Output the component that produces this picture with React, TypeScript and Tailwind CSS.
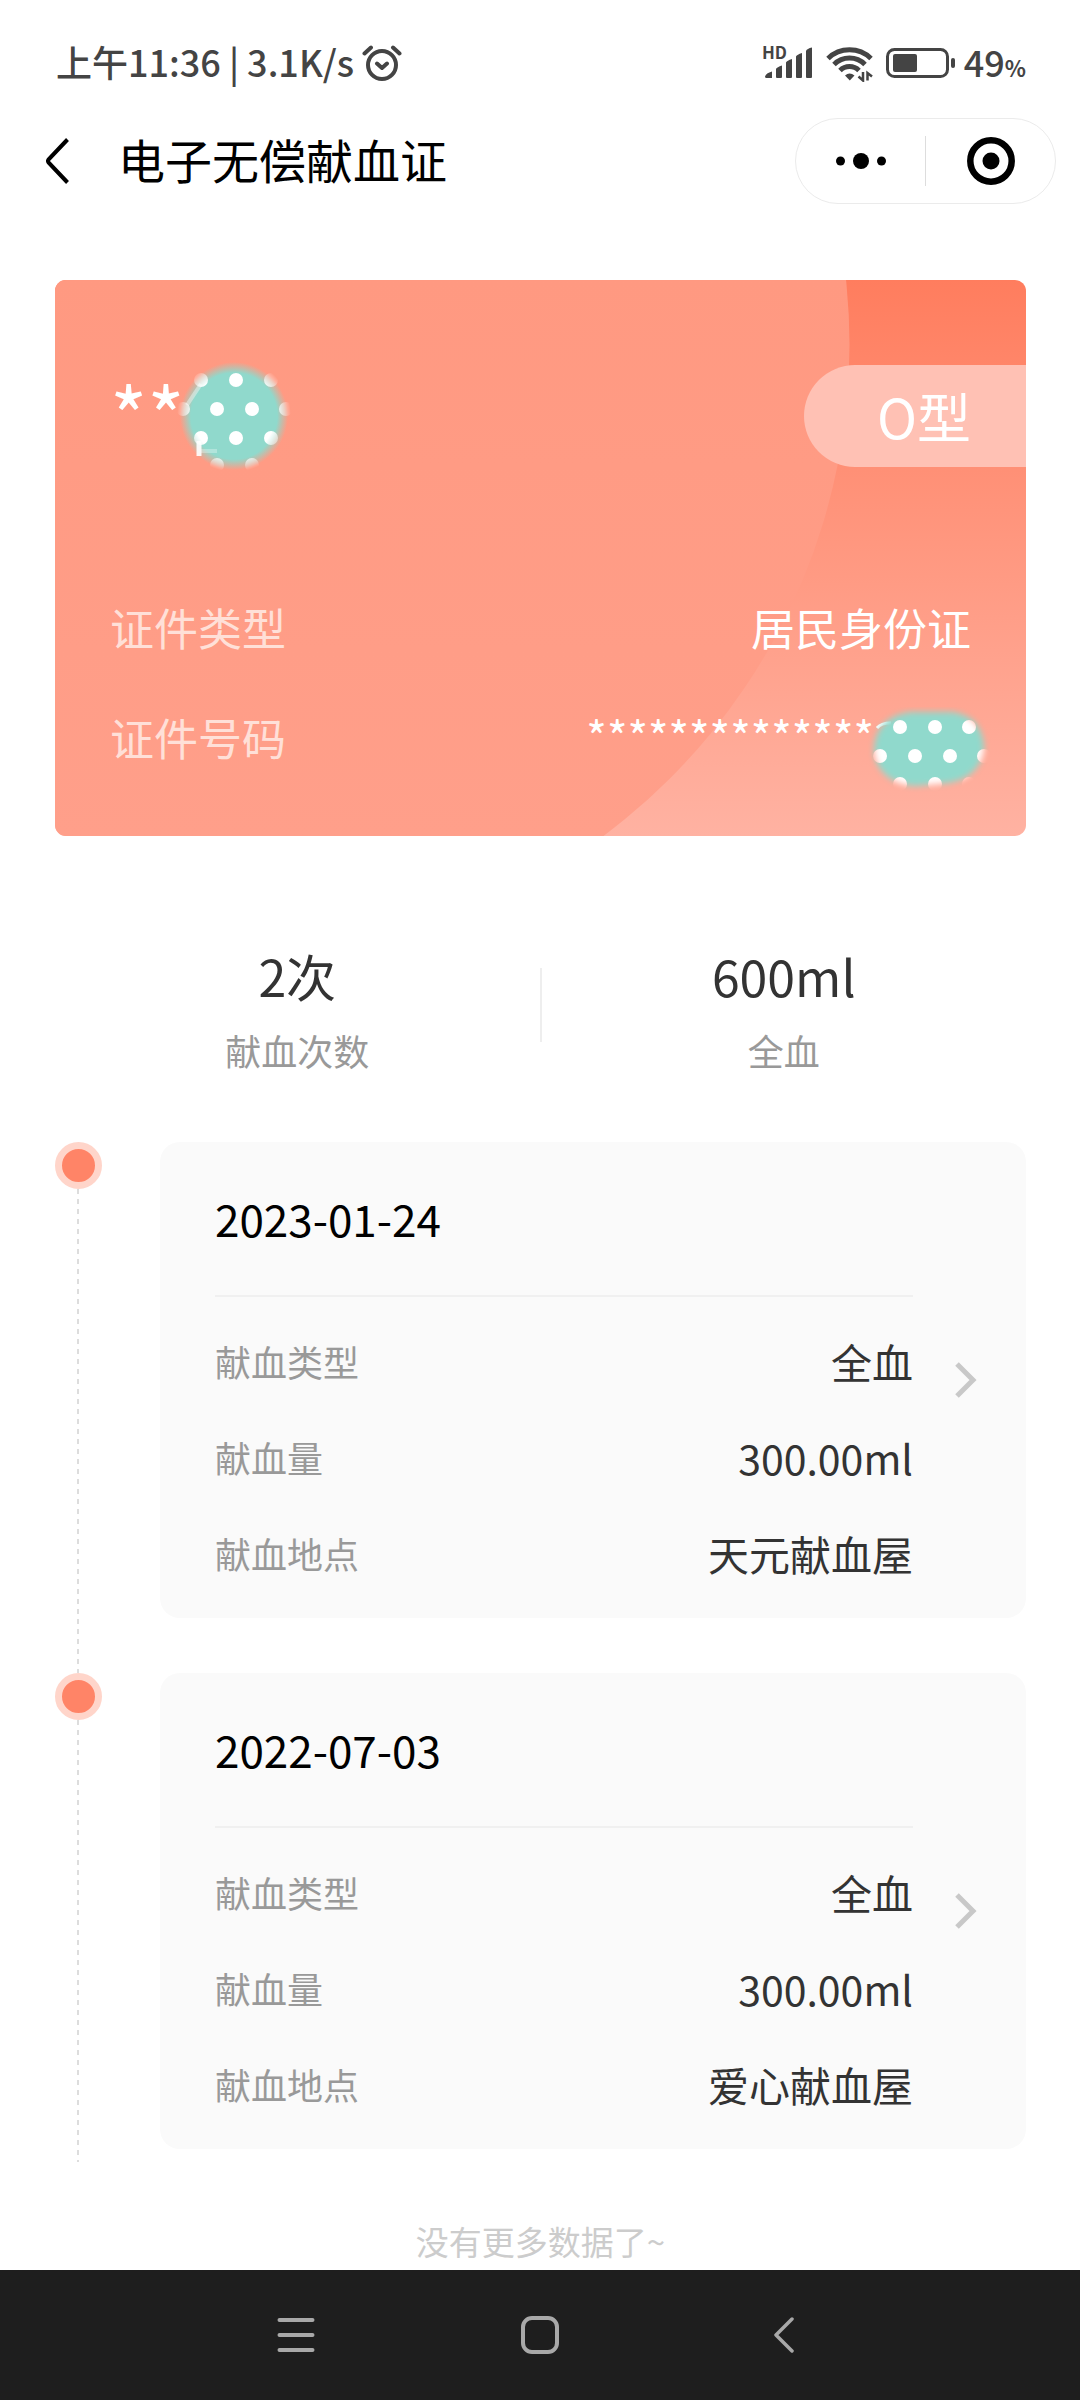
interface DonationRecord {
  id: string;
  date: string;
  type: string;
  volume: string;
  place: string;
}

const records: DonationRecord[] = [
  { id: "1", date: "2023-01-24", type: "全血", volume: "300.00ml", place: "天元献血屋" },
  { id: "2", date: "2022-07-03", type: "全血", volume: "300.00ml", place: "爱心献血屋" },
];

const stats = [
  { value: "2次", label: "献血次数" },
  { value: "600ml", label: "全血" },
];

function StatusBar() {
  return (
    <div className="flex h-[118px] items-center justify-between pt-2 pr-[54px] pl-[56px] text-[#444]">
      <div className="flex items-center gap-2">
        <span className="pb-1 text-[36px] leading-[48px] font-medium">上午11:36 | 3.1K/s</span>
        <svg width="40" height="38" viewBox="0 0 40 38" fill="none" stroke="currentColor" strokeWidth="4" strokeLinecap="round" strokeLinejoin="round">
          <circle cx="20" cy="21" r="14" />
          <path d="M2.5 9.5 9 3.5M37.5 9.5 31 3.5M15 19.5l5 4.5 5-4.5" />
        </svg>
      </div>

      <div className="flex items-center">
        <svg width="52" height="46" viewBox="0 0 52 46" fill="currentColor">
          <text x="0" y="19" fontSize="17" fontWeight="700">HD</text>
          <path d="M3 36.500q1-3.500 7-5v6.500h-5.500q-1.500 0-1.500-1.500zM14 29q1-2 6-3.500v11.500q0 1-1 1h-4q-1 0-1-1zM24 22.500q1-2 6-3.500v18q0 1-1 1h-4q-1 0-1-1zM34 16.500q1-2 6-3.500v24q0 1-1 1h-4q-1 0-1-1zM44 11q1-2.500 6-3.500v29.500q0 1-1 1h-4q-1 0-1-1z" />
        </svg>
        <svg className="ml-3" width="48" height="38" viewBox="0 0 48 38" fill="none" stroke="currentColor" strokeWidth="5">
          <path d="M2 14.500a31 31 0 0 1 43 0M8 20.500a22 22 0 0 1 31 0M14 26.500a13.500 13.500 0 0 1 19 0" />
          <path d="M19 31.500q4.500-4 9.500 0l-4.700 5z" fill="currentColor" stroke="none" />
          <path d="M37 28v8.500l-4.500-4M41.500 36.500V29l4.500 3.500" strokeWidth="2.500" />
        </svg>
        <svg className="ml-3" width="70" height="32" viewBox="0 0 70 32" fill="none">
          <rect x="1.500" y="2.500" width="60" height="27" rx="7" stroke="currentColor" strokeWidth="3" />
          <rect x="7" y="7" width="24" height="18" rx="2" fill="currentColor" />
          <rect x="65" y="11" width="4" height="10" rx="2" fill="currentColor" />
        </svg>
        <p className="ml-2 flex items-baseline pb-1 font-medium">
          <span className="text-[36px] leading-[48px]">49</span>
          <span className="text-[22px] font-bold">%</span>
        </p>
      </div>
    </div>
  );
}

function Header() {
  return (
    <header className="flex h-[86px] items-center justify-between pr-[24px] pl-[46px]">
      <div className="flex items-center gap-12">
        <button type="button" aria-label="返回">
          <svg width="24" height="46" viewBox="0 0 24 46" fill="none" stroke="#000" strokeWidth="4">
            <path d="M21.500 1.500 2.500 21.500q-1 1.500 0 3L21.500 44.500" />
          </svg>
        </button>
        <h1 className="pb-1 text-[47px] leading-[64px] text-black">电子无偿献血证</h1>
      </div>

      <div className="flex h-full w-[261px] items-center rounded-full border border-[#ebebeb]">
        <button type="button" aria-label="更多" className="flex h-full flex-1 items-center justify-center">
          <svg width="50" height="16" viewBox="0 0 50 16" fill="#000">
            <circle cx="4.500" cy="8" r="4.500" />
            <circle cx="25" cy="8" r="8" />
            <circle cx="45.500" cy="8" r="4.500" />
          </svg>
        </button>
        <div className="h-[50px] w-px bg-[#ddd]" />
        <button type="button" aria-label="关闭" className="flex h-full flex-1 items-center justify-center">
          <svg width="48" height="48" viewBox="0 0 48 48">
            <circle cx="24" cy="24" r="20.700" fill="none" stroke="#000" strokeWidth="6.500" />
            <circle cx="24" cy="24" r="8.500" fill="#000" />
          </svg>
        </button>
      </div>
    </header>
  );
}

// Dotted sticker over the last character of the name
function NameSticker() {
  return (
    <svg className="absolute -top-[9px] left-[66px]" width="120" height="120" viewBox="0 0 120 120">
      <defs>
        <radialGradient id="name-fade">
          <stop offset="0.72" stopColor="#fff" />
          <stop offset="0.88" stopColor="#fff" stopOpacity="0.45" />
          <stop offset="1" stopColor="#fff" stopOpacity="0" />
        </radialGradient>
        <mask id="name-mask">
          <circle cx="58" cy="59" r="57" fill="url(#name-fade)" />
        </mask>
        <radialGradient id="name-teal">
          <stop offset="0.8" stopColor="#90d9cc" />
          <stop offset="1" stopColor="#90d9cc" stopOpacity="0" />
        </radialGradient>
      </defs>
      <circle cx="58" cy="60" r="54" fill="url(#name-teal)" />
      <path d="M25 28 11 49" stroke="#fff" strokeWidth="4" opacity="0.4" />
      <path d="M23 85v15" stroke="#fff" strokeWidth="5" opacity="0.9" />
      <path d="M25 95h16" stroke="#fff" strokeWidth="4" opacity="0.3" />
      <g fill="#fff" mask="url(#name-mask)">
        <circle cx="25" cy="24" r="7" />
        <circle cx="60" cy="24" r="7" />
        <circle cx="95" cy="24" r="7" />
        <circle cx="7" cy="53" r="7" />
        <circle cx="41" cy="53" r="7" />
        <circle cx="76" cy="53" r="7" />
        <circle cx="110" cy="53" r="7" />
        <circle cx="25" cy="82" r="7" />
        <circle cx="60" cy="82" r="7" />
        <circle cx="95" cy="82" r="7" />
        <circle cx="41" cy="109" r="7" />
        <circle cx="76" cy="109" r="7" />
      </g>
    </svg>
  );
}

// Dotted sticker over the last digits of the ID number
function NumberSticker() {
  return (
    <svg className="absolute top-0 -right-[20px]" width="124" height="90" viewBox="0 0 124 90">
      <defs>
        <filter id="number-blur" x="-20%" y="-20%" width="140%" height="140%">
          <feGaussianBlur stdDeviation="3" />
        </filter>
        <mask id="number-mask">
          <path
            d="M44 5h40c20 2 32 14 33 36-2 20-16 32-36 35l-32 3C24 78 9 64 7 44 7 22 20 8 44 5z"
            fill="#fff"
            filter="url(#number-blur)"
          />
        </mask>
      </defs>
      <path d="M10 21q4-5 14-5" fill="none" stroke="#fff" strokeWidth="3" />
      <g mask="url(#number-mask)">
        <rect width="124" height="90" fill="#90d9cc" />
        <g fill="#fff">
          <circle cx="33" cy="20" r="7" />
          <circle cx="68" cy="20" r="7" />
          <circle cx="102" cy="20" r="7" />
          <circle cx="13" cy="49" r="7" />
          <circle cx="48" cy="49" r="7" />
          <circle cx="83" cy="49" r="7" />
          <circle cx="117" cy="49" r="7" />
          <circle cx="33" cy="77" r="7" />
          <circle cx="68" cy="77" r="7" />
          <circle cx="102" cy="77" r="7" />
        </g>
      </g>
    </svg>
  );
}

function DonorCard() {
  return (
    <section className="relative mt-[76px] overflow-hidden rounded-[11px] bg-linear-to-b from-[#ff7d5e] to-[#ffb2a2] pt-[85px] pb-[69px] text-white">
      <svg className="absolute top-0 left-0" width="795" height="556" viewBox="0 0 795 556">
        <defs>
          <linearGradient id="disc" x1="0" y1="0" x2="0" y2="556" gradientUnits="userSpaceOnUse">
            <stop offset="0" stopColor="#ff9981" />
            <stop offset="1" stopColor="#ff9f8a" />
          </linearGradient>
        </defs>
        <circle cx="181.500" cy="65" r="613" fill="url(#disc)" />
      </svg>

      <div className="relative flex items-start justify-between pl-[55px]">
        <div className="relative">
          <p className="text-[80px] leading-[96px]">**</p>
          <NameSticker />
        </div>
        <p className="w-[222px] rounded-l-full bg-[#ffc1b4] pr-[55px] text-right text-[54px] leading-[102px]">O型</p>
      </div>

      <dl className="relative mt-[130px] flex flex-col gap-[50px] px-[55px] text-[44px] leading-[60px]">
        <div className="flex justify-between">
          <dt className="text-[#ffe0d8]">证件类型</dt>
          <dd>居民身份证</dd>
        </div>
        <div className="relative flex justify-between">
          <dt className="text-[#ffe0d8]">证件号码</dt>
          <dd className="pr-[97px] leading-[56px]">**************</dd>
          <NumberSticker />
        </div>
      </dl>
    </section>
  );
}

function Stats() {
  return (
    <section className="mt-[104px] flex items-center">
      {stats.map((item, index) => (
        <div key={item.label} className="contents">
          {index > 0 && <div className="h-[74px] w-[2px] bg-[#eee]" />}
          <div className="flex flex-1 flex-col items-center gap-5">
            <p className="text-[50px] leading-[70px] text-[#333]">{item.value}</p>
            <p className="text-[36px] leading-[40px] text-[#999]">{item.label}</p>
          </div>
        </div>
      ))}
    </section>
  );
}

function RecordItem({ record }: { record: DonationRecord }) {
  const rows = [
    { label: "献血类型", value: record.type },
    { label: "献血量", value: record.volume },
    { label: "献血地点", value: record.place },
  ];

  return (
    <li className="group flex gap-[58px]">
      <div className="flex flex-col items-start">
        <span className="size-[47px] rounded-full border-[7px] border-[#ffd5ca] bg-[#ff8467]" />
        <span className="ml-[22px] w-[2px] flex-1 bg-[repeating-linear-gradient(to_bottom,#ddd_0_5px,transparent_5px_10px)]" />
      </div>

      <div className="flex-1 pb-[55px] group-last:pb-[13px]">
        <a href={`#record-${record.id}`} className="flex items-center rounded-[20px] bg-[#fafafa] pr-12 pl-[55px]">
          <div className="flex-1">
            <h2 className="border-b-2 border-[#f0f0f0] pt-[44px] pb-[45px] text-[44px] leading-[64px] text-black">
              {record.date}
            </h2>
            <dl className="flex flex-col gap-12 pt-[40px] pb-[41px] leading-[48px]">
              {rows.map((row) => (
                <div key={row.label} className="flex justify-between">
                  <dt className="text-[36px] text-[#999]">{row.label}</dt>
                  <dd className="text-[41px] text-[#333]">{row.value}</dd>
                </div>
              ))}
            </dl>
          </div>
          <svg className="ml-[41px]" width="24" height="38" viewBox="0 0 24 38" fill="none" stroke="#c8c8c8" strokeWidth="5">
            <path d="M3 3l16 16L3 35" />
          </svg>
        </a>
      </div>
    </li>
  );
}

function NavBar() {
  return (
    <nav className="flex h-[130px] items-center bg-[#1e1e1e] px-[174px] text-[#a8a8a8]">
      <button type="button" aria-label="最近任务" className="flex h-full flex-1 items-center justify-center">
        <svg width="38" height="38" viewBox="0 0 38 38" fill="none" stroke="currentColor" strokeWidth="4" strokeLinecap="round">
          <path d="M2.500 4h33M2.500 19h33M2.500 34h33" />
        </svg>
      </button>
      <button type="button" aria-label="主屏幕" className="flex h-full flex-1 items-center justify-center">
        <svg width="38" height="38" viewBox="0 0 38 38" fill="none" stroke="currentColor" strokeWidth="4">
          <rect x="2" y="2" width="34" height="34" rx="9" />
        </svg>
      </button>
      <button type="button" aria-label="返回上一页" className="flex h-full flex-1 items-center justify-center">
        <svg width="20" height="38" viewBox="0 0 20 38" fill="none" stroke="currentColor" strokeWidth="3.500" strokeLinecap="round" strokeLinejoin="round">
          <path d="M18 3 2 19l16 16" />
        </svg>
      </button>
    </nav>
  );
}

export default function App() {
  return (
    <div className="flex min-h-screen flex-col bg-white font-['Noto_Sans_CJK_SC',sans-serif]">
      <StatusBar />
      <Header />
      <main className="flex-1 pr-[54px] pl-[55px]">
        <DonorCard />
        <Stats />
        <ul className="mt-[72px]">
          {records.map((record) => (
            <RecordItem key={record.id} record={record} />
          ))}
        </ul>
        <p className="mt-[56px] text-center text-[33px] leading-[46px] text-[#ccc]">没有更多数据了~</p>
      </main>
      <NavBar />
    </div>
  );
}
